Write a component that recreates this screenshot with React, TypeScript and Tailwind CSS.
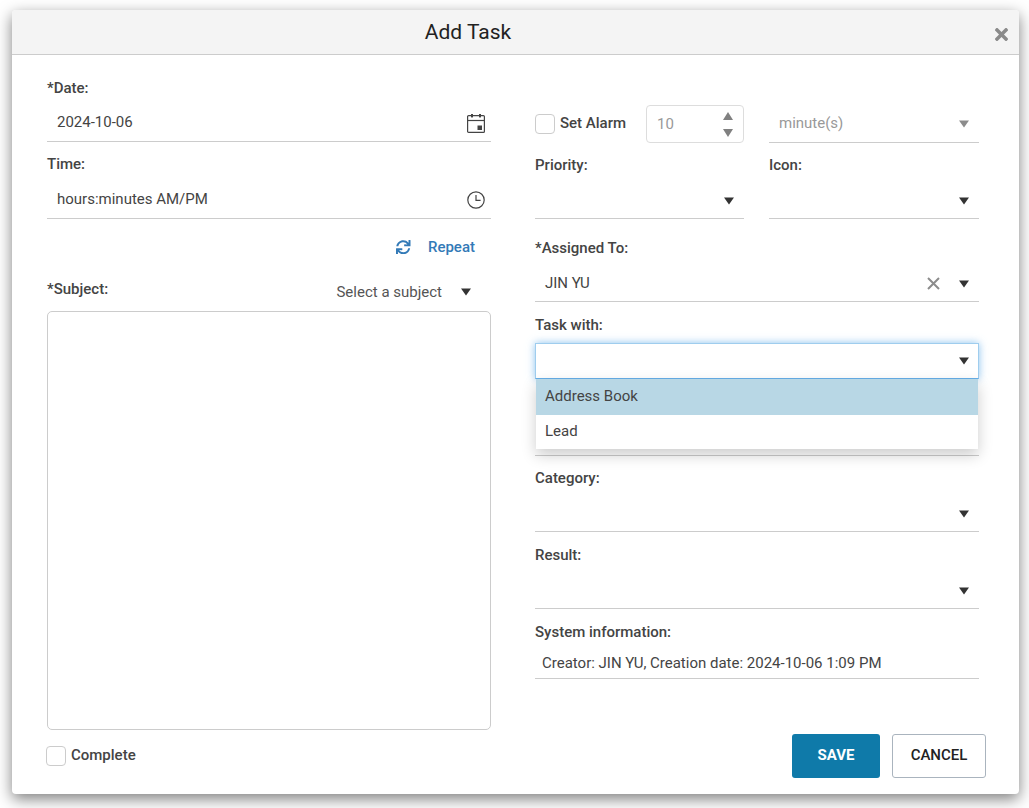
import { FaSync, FaTimes } from "react-icons/fa"
import { ReactNode } from "react"

function Caret({ muted, className }: { muted?: boolean; className?: string }) {
  return (
    <svg
      width="10"
      height="8"
      viewBox="0 0 10 8"
      className={`${muted ? "text-[#8c8c8c]" : "text-[#333333]"} ${className ?? ""}`}
    >
      <polygon points="0,0.5 10,0.5 5,7.5" fill="currentColor" />
    </svg>
  )
}

function CalendarIcon() {
  return (
    <svg width="18" height="20" viewBox="0 0 18 20" fill="none" className="-mr-[4px] text-[#444444]">
      <rect x="0.6" y="2.6" width="16.8" height="16.8" rx="1" stroke="currentColor" strokeWidth="1.2" />
      <line x1="1" y1="7.5" x2="17" y2="7.5" stroke="currentColor" strokeWidth="1.2" />
      <rect x="4" y="1" width="2" height="3.4" fill="currentColor" />
      <rect x="12" y="1" width="2" height="3.4" fill="currentColor" />
      <rect x="10.5" y="12.5" width="4.5" height="4.5" fill="currentColor" />
    </svg>
  )
}

function ClockIcon() {
  return (
    <svg width="18" height="18" viewBox="0 0 18 18" fill="none" className="-mr-[4px] text-[#444444]">
      <circle cx="9" cy="9" r="8.2" stroke="currentColor" strokeWidth="1.2" />
      <path d="M9 4v5.4h4.6" stroke="currentColor" strokeWidth="1.2" />
    </svg>
  )
}

function ClearIcon() {
  return (
    <svg width="13" height="13" viewBox="0 0 13 13" className="text-[#8c8c8c]">
      <path d="M1 1l11 11M12 1L1 12" stroke="currentColor" strokeWidth="2" />
    </svg>
  )
}

function Label({ children, className }: { children: ReactNode; className?: string }) {
  return <div className={`text-[15px] font-medium leading-5 text-[#444444] ${className ?? ""}`}>{children}</div>
}

function Field({
  label,
  labelPad,
  height,
  children,
  right,
  valuePad,
}: {
  label: string
  labelPad: string
  height: string
  children?: ReactNode
  right?: ReactNode
  valuePad?: string
}) {
  return (
    <div className={`flex flex-col justify-between ${height}`}>
      <Label className={labelPad}>{label}</Label>
      <div className="flex h-[40px] items-center justify-between border-b border-[#cccccc] px-[10px] pt-[2px] text-[15px] text-[#444444]">
        <span className={valuePad}>{children}</span>
        {right}
      </div>
    </div>
  )
}

function Check({ label }: { label: string }) {
  return (
    <div className="flex items-center gap-[5px]">
      <span className="h-[20px] w-[20px] rounded-[4px] border border-[#cccccc] bg-white" />
      <span className="-mt-[2px] text-[15px] font-medium text-[#444444]">{label}</span>
    </div>
  )
}

export default function App() {
  return (
    <div className="h-[808px] w-[1029px] overflow-hidden bg-white pl-[12px] pt-[10px] font-['Roboto',sans-serif]">
      <div className="flex h-[784px] w-[1007px] flex-col rounded-[4px] bg-white shadow-[0_5px_15px_rgba(0,0,0,0.5)]">
        <div className="relative flex h-[45px] items-center justify-center rounded-t-[4px] border-b border-[#cccccc] bg-[#f4f4f4] pr-[95px]">
          <h1 className="text-[21px] font-normal leading-none text-[#222222]">Add Task</h1>
          <FaTimes className="absolute right-[8px] top-[15px] text-[19px] text-[#8a8a8a]" />
        </div>

        <div className="flex flex-1 gap-[44px] pl-[35px] pr-[40px]">
          {/* left column */}
          <div className="flex w-[444px] flex-col pt-[10px]">
            <Field label="*Date:" labelPad="pt-[13px]" height="h-[77px]" right={<CalendarIcon />}>
              2024-10-06
            </Field>
            <Field label="Time:" labelPad="pt-[12px]" height="h-[77px]" right={<ClockIcon />}>
              hours:minutes AM/PM
            </Field>
            <div className="mt-[18px] flex items-center justify-end gap-[17px] pr-[16px] text-[15px] font-medium leading-5 text-[#337ab7]">
              <FaSync className="text-[14.5px]" />
              <span>Repeat</span>
            </div>
            <div className="mt-[22px] flex items-start justify-between">
              <Label>*Subject:</Label>
              <div className="mt-[3px] flex items-center gap-[19px] pr-[20px] text-[15px] leading-5 text-[#555555]">
                <span>Select a subject</span>
                <Caret />
              </div>
            </div>
            <div className="mt-[9px] h-[419px] rounded-[5px] border border-[#cccccc] bg-white" />
            <div className="-ml-px mt-[16px]">
              <Check label="Complete" />
            </div>
          </div>

          {/* right column */}
          <div className="flex w-[444px] flex-col pt-[10px]">
            <div className="flex h-[78px] items-end gap-[25px]">
              <div className="flex w-[209px] items-center justify-between">
                <Check label="Set Alarm" />
                <div className="flex h-[38px] w-[98px] items-center justify-between rounded-[4px] border border-[#dddddd] px-[10px] text-[15px] text-[#999999]">
                  <span>10</span>
                  <div className="flex flex-col gap-[9px]">
                    <svg width="10" height="8" viewBox="0 0 10 8" className="text-[#808080]">
                      <polygon points="5,0 10,8 0,8" fill="currentColor" />
                    </svg>
                    <svg width="10" height="8" viewBox="0 0 10 8" className="text-[#808080]">
                      <polygon points="0,0 10,0 5,8" fill="currentColor" />
                    </svg>
                  </div>
                </div>
              </div>
              <div className="flex h-[38px] w-[210px] items-center justify-between border-b border-[#cccccc] px-[10px] text-[15px] text-[#999999]">
                <span>minute(s)</span>
                <Caret muted />
              </div>
            </div>

            <div className="flex gap-[25px]">
              <div className="w-[209px]">
                <Field label="Priority:" labelPad="pt-[12px]" height="h-[76px]" right={<Caret className="mt-[2px]" />} />
              </div>
              <div className="w-[210px]">
                <Field label="Icon:" labelPad="pt-[12px]" height="h-[76px]" right={<Caret className="mt-[2px]" />} />
              </div>
            </div>

            <Field
              label="*Assigned To:"
              labelPad="pt-[19px]"
              height="h-[83px]"
              valuePad="pt-[2px]"
              right={
                <div className="mt-[2px] flex items-center gap-[19px]">
                  <ClearIcon />
                  <Caret />
                </div>
              }
            >
              JIN YU
            </Field>

            <div className="relative">
              <Label className="pt-[13px]">Task with:</Label>
              <div className="mt-[8px] flex h-[36px] items-center justify-end border border-[#9fcdee] border-b-[#66afe9] bg-white pr-[9px] shadow-[0_0_8px_rgba(102,175,233,0.75)]">
                <Caret />
              </div>
              <div className="absolute left-px right-px top-[77px] z-10 bg-white text-[15px] text-[#444444] shadow-[0_6px_14px_rgba(0,0,0,0.2)]">
                <div className="flex h-[36px] items-center bg-[#b8d7e5] pb-[2px] pl-[9px]">Address Book</div>
                <div className="flex h-[34px] items-center pb-[2px] pl-[9px]">Lead</div>
              </div>
            </div>

            <div className="h-[77px] border-b border-[#cccccc]" />

            <Field label="Category:" labelPad="pt-[12px]" height="h-[76px]" right={<Caret className="mt-[2px]" />} />
            <Field label="Result:" labelPad="pt-[13px]" height="h-[77px]" right={<Caret className="mt-[2px]" />} />

            <div className="flex h-[70px] flex-col justify-between">
              <Label className="pt-[13px]">System information:</Label>
              <div className="flex h-[32px] items-center border-b border-[#cccccc] pl-[7px] pt-[2px] text-[15px] text-[#444444]">
                Creator: JIN YU, Creation date: 2024-10-06 1:09 PM
              </div>
            </div>

            <div className="-mr-[7px] mt-[55px] flex justify-end gap-[12px]">
              <button className="h-[44px] w-[88px] rounded-[3px] bg-[#0f7aa9] pb-[2px] text-[15px] font-bold text-white">
                SAVE
              </button>
              <button className="h-[44px] w-[94px] rounded-[3px] border border-[#aab4be] bg-white pb-[2px] text-[15px] font-medium text-[#222222]">
                CANCEL
              </button>
            </div>
          </div>
        </div>
      </div>
    </div>
  )
}
